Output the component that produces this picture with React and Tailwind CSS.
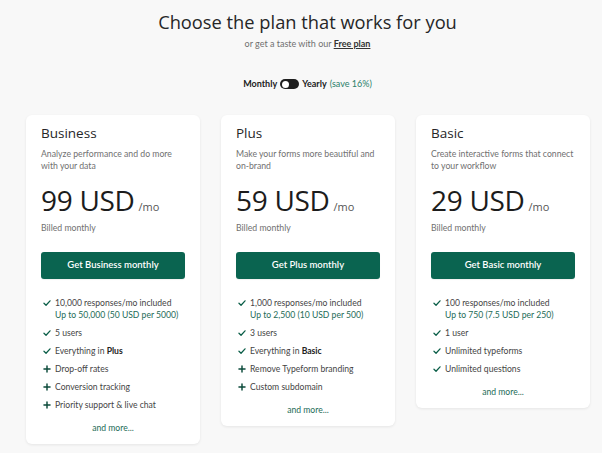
import React from "react";

const Check = () => (
  <svg width="8" height="8" viewBox="0 0 10 10" className="shrink-0 mt-[2px]">
    <path d="M1.2 5.3 L3.8 7.8 L8.8 2.3" fill="none" stroke="#0b5e48" strokeWidth="1.6" strokeLinecap="round" strokeLinejoin="round" />
  </svg>
);
const PlusI = () => (
  <svg width="8" height="8" viewBox="0 0 10 10" className="shrink-0 mt-[2px]">
    <path d="M5 1.2 V8.8 M1.2 5 H8.8" fill="none" stroke="#0b4a3a" strokeWidth="1.8" strokeLinecap="round" />
  </svg>
);

const plans = [
  {
    name: "Business",
    desc: ["Analyze performance and do more", "with your data"],
    price: "99",
    btn: "Get Business monthly",
    first: ["10,000 responses/mo included", "Up to 50,000 (50 USD per 5000)"],
    items: [
      { t: "check", c: <>5 users</> },
      { t: "check", c: <>Everything in <b className="font-bold text-[#222]">Plus</b></> },
      { t: "plus", c: <>Drop-off rates</> },
      { t: "plus", c: <>Conversion tracking</> },
      { t: "plus", c: <>Priority support &amp; live chat</> },
    ],
  },
  {
    name: "Plus",
    desc: ["Make your forms more beautiful and", "on-brand"],
    price: "59",
    btn: "Get Plus monthly",
    first: ["1,000 responses/mo included", "Up to 2,500 (10 USD per 500)"],
    items: [
      { t: "check", c: <>3 users</> },
      { t: "check", c: <>Everything in <b className="font-bold text-[#222]">Basic</b></> },
      { t: "plus", c: <>Remove Typeform branding</> },
      { t: "plus", c: <>Custom subdomain</> },
    ],
  },
  {
    name: "Basic",
    desc: ["Create interactive forms that connect", "to your workflow"],
    price: "29",
    btn: "Get Basic monthly",
    first: ["100 responses/mo included", "Up to 750 (7.5 USD per 250)"],
    items: [
      { t: "check", c: <>1 user</> },
      { t: "check", c: <>Unlimited typeforms</> },
      { t: "check", c: <>Unlimited questions</> },
    ],
  },
];

function Card({ p }) {
  return (
    <div className="w-[174px] bg-white rounded-[6px] shadow-[0_1px_3px_rgba(0,0,0,0.08)] px-[15px] pt-[8px] pb-[10px]">
      <div className="text-[13.5px] leading-[20px] text-[#262627] font-['Open_Sans',sans-serif]">{p.name}</div>
      <div className="mt-[5px] text-[8.7px] leading-[11.5px] text-[#707070] whitespace-nowrap">
        <div>{p.desc[0]}</div>
        <div>{p.desc[1]}</div>
      </div>
      <div className="mt-[13px] flex items-baseline h-[32px]">
        <span className="text-[28px] leading-[32px] text-[#1c1c1c] font-['Open_Sans',sans-serif] tracking-[-0.3px]">{p.price} USD</span>
        <span className="ml-[4px] text-[11px] text-[#555] font-['Open_Sans',sans-serif]">/mo</span>
      </div>
      <div className="mt-[6px] text-[8.7px] leading-[12px] text-[#707070]">Billed monthly</div>
      <div className="mt-[18px] h-[27px] rounded-[3px] bg-[#0a6450] flex items-center justify-center text-white text-[9.5px] font-semibold shadow-[0_1px_1px_rgba(0,0,0,0.06)]">
        {p.btn}
      </div>
      <div className="mt-[18px] pl-[2px] flex flex-col gap-[6px] text-[8.6px] leading-[12px] text-[#444]">
        <div className="flex gap-[4px]">
          <Check />
          <div>
            <div>{p.first[0]}</div>
            <div className="text-[#1d6b57]">{p.first[1]}</div>
          </div>
        </div>
        {p.items.map((it, i) => (
          <div key={i} className="flex gap-[4px]">
            {it.t === "check" ? <Check /> : <PlusI />}
            <div>{it.c}</div>
          </div>
        ))}
      </div>
      <div className="mt-[11px] text-center text-[8.6px] leading-[12px] text-[#1d6b57]">and more...</div>
    </div>
  );
}

export default function App() {
  return (
    <div className="w-[602px] h-[453px] overflow-hidden bg-[#f8f8f8] font-['Lato',sans-serif]">
      <div className="pl-[13px]">
        <div className="pt-[8px] text-center text-[18.3px] leading-[28px] text-[#262627] font-['Open_Sans',sans-serif]">
          Choose the plan that works for you
        </div>
        <div className="mt-[2px] text-center text-[9px] leading-[12px] text-[#707070]">
          or get a taste with our <span className="underline text-[#333] font-bold">Free plan</span>
        </div>
        <div className="mt-[28px] flex items-center justify-center gap-[3px] text-[9px] leading-[12px]">
          <span className="font-bold text-[#222]">Monthly</span>
          <span className="w-[19px] h-[10px] rounded-full bg-[#1e1e1e] flex items-center pl-[1.5px]">
            <span className="w-[7px] h-[7px] rounded-full bg-white" />
          </span>
          <span className="font-bold text-[#222]">Yearly</span>
          <span className="text-[#2a7f6a]">(save 16%)</span>
        </div>
      </div>
      <div className="mt-[25px] flex items-start gap-[21px] pl-[26px]">
        {plans.map((p) => (
          <Card key={p.name} p={p} />
        ))}
      </div>
    </div>
  );
}
